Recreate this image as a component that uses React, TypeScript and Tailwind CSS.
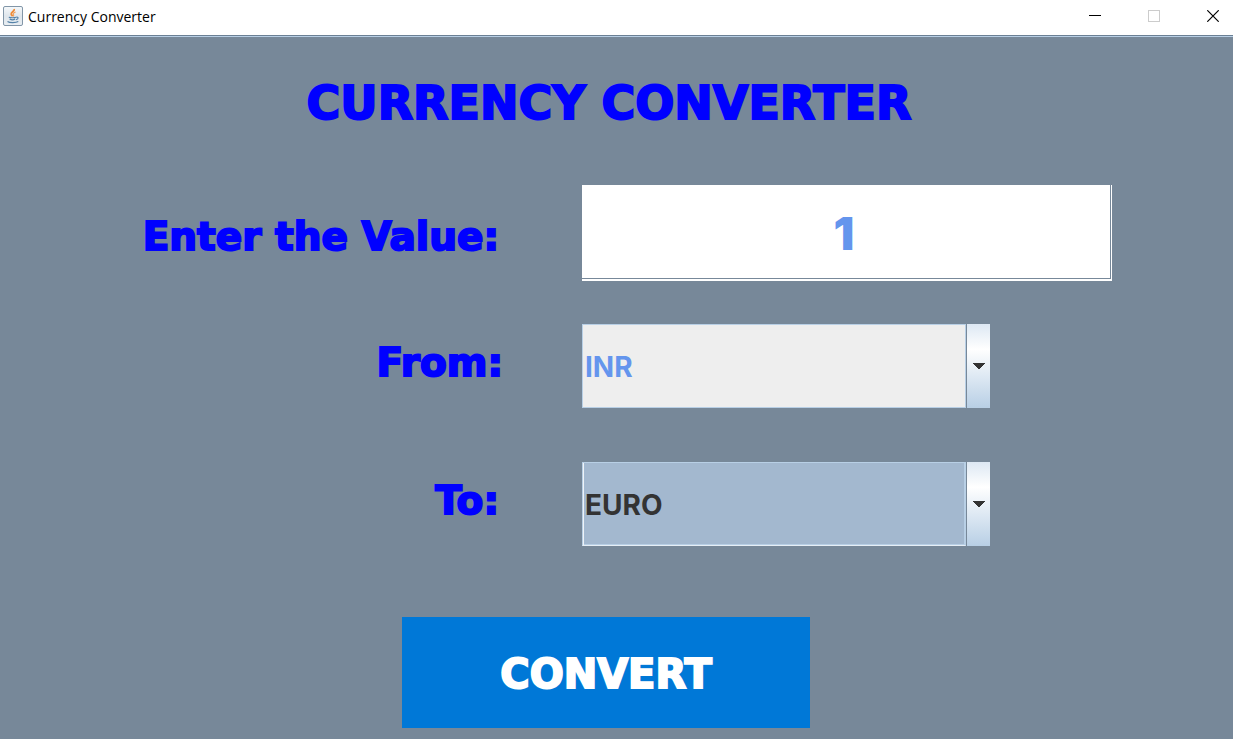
import { useState } from "react";

const currencies = ["INR", "EURO", "USD", "GBP"];

function JavaIcon() {
  return (
    <svg width="20" height="20" viewBox="0 0 20 20" aria-hidden="true">
      <defs>
        <linearGradient id="tile" x1="0" y1="0" x2="0" y2="1">
          <stop offset="0" stopColor="#f6f9fb" />
          <stop offset="0.5" stopColor="#dfe6ec" />
          <stop offset="1" stopColor="#e9eef2" />
        </linearGradient>
      </defs>
      <rect x="0.5" y="0.5" width="19" height="19" rx="1.5" fill="url(#tile)" stroke="#8296a8" />
      <path d="M11.2 3c.8 2.200-3.400 3-3 5 .2 1 1 1.500 1.400 2.200" fill="none" stroke="#ee8a35" strokeWidth="1.800" />
      <path d="M12.600 6c-1.800.6-2.800 1.400-2.300 2.500.3.700.7 1 .1 2" fill="none" stroke="#f0a05c" strokeWidth="1.200" />
      <path d="M5.800 11.200c1.800.7 5.800.7 7.200 0M6.600 13c1.500.8 4.200.8 5.600 0M4.500 15.500c2.300 1.500 8.500 1.400 10.800 0M13.200 11.200c2.300-.7 2.700 1.700-.1 2.500" fill="none" stroke="#5482a8" strokeWidth="1.200" />
    </svg>
  );
}

function TitleBar() {
  return (
    <header className="flex h-[37px] items-start justify-between border-b border-[#b8cfe5] bg-white">
      <div className="flex h-[35px] w-full items-center justify-between pb-[3px] shadow-[0_1px_0_#6b8094]">
        <div className="flex items-center gap-[5px] pl-[3px]">
          <JavaIcon />
          <span className="pt-px font-['Open_Sans','Noto_Sans',sans-serif] text-[14px] leading-5 text-black">Currency Converter</span>
        </div>
        <div className="flex gap-[47px] pr-[14px]">
          <button type="button" aria-label="Minimize">
            <svg width="12" height="12" viewBox="0 0 12 12" shapeRendering="crispEdges"><path d="M0 5.500h12" stroke="#000" /></svg>
          </button>
          <button type="button" aria-label="Maximize" disabled>
            <svg width="12" height="12" viewBox="0 0 12 12" shapeRendering="crispEdges"><rect x=".5" y=".5" width="11" height="11" fill="none" stroke="#ccc" /></svg>
          </button>
          <button type="button" aria-label="Close">
            <svg width="12" height="12" viewBox="0 0 12 12"><path d="M.3.300l11.400 11.400M11.700.300L.3 11.700" stroke="#000" strokeWidth="1.200" /></svg>
          </button>
        </div>
      </div>
    </header>
  );
}

type CurrencySelectProps = {
  id: string;
  value: string;
  onChange: (value: string) => void;
  className: string;
};

function CurrencySelect({ id, value, onChange, className }: CurrencySelectProps) {
  return (
    <div className="flex h-[84px] w-[77%] gap-px">
      <select
        id={id}
        value={value}
        onChange={(e) => onChange(e.target.value)}
        className={`min-w-0 flex-1 appearance-none border pt-0.5 pl-0.5 font-['Inter',sans-serif] text-[28px] font-bold outline-none ${className}`}
      >
        {currencies.map((c) => (
          <option key={c}>{c}</option>
        ))}
      </select>
      <div className="pointer-events-none flex w-[23px] items-center justify-center bg-linear-to-b from-[#dde8f3] via-white via-30% to-[#b8cfe5]">
        <svg width="12" height="6" viewBox="0 0 12 6" shapeRendering="crispEdges" aria-hidden="true">
          <path d="M0 0h12L6.500 6h-1z" fill="#333" />
        </svg>
      </div>
    </div>
  );
}

export default function App() {
  const [amount, setAmount] = useState("1");
  const [from, setFrom] = useState("INR");
  const [to, setTo] = useState("EURO");
  const label = "text-right text-[39px] leading-[48px] font-black text-[#0000ff] [-webkit-text-stroke:2px_#0000ff]";

  return (
    <div className="flex min-h-screen flex-col bg-[#778899] font-['DejaVu_Sans',sans-serif]">
      <TitleBar />
      <main className="pt-[38px] pb-[11px]">
        <h1 className="pr-[15px] text-center text-[46px] leading-[56px] font-black text-[#0000ff] [-webkit-text-stroke:2px_#0000ff]">
          CURRENCY CONVERTER
        </h1>
        <form onSubmit={(e) => e.preventDefault()}>
          <div className="mt-[54px] grid grid-cols-[503fr_530fr] items-center gap-x-[79px] pr-[121px]">
            <label htmlFor="amount" className={`${label} pt-2 pr-1`}>Enter the Value:</label>
            <div className="border-r border-b-2 border-white">
              <input
                id="amount"
                type="text"
                value={amount}
                onChange={(e) => setAmount(e.target.value)}
                className="block h-[94px] w-full border-r border-b border-[#778899] bg-white pt-0.5 pr-1 text-center font-['Inter',sans-serif] text-[46px] font-black text-[#6495ed] outline-none"
              />
            </div>
          </div>
          <div className="mt-[43px] grid grid-cols-[503fr_530fr] items-center gap-x-[79px] pr-[121px]">
            <label htmlFor="from" className={`${label} pb-1.5`}>From:</label>
            <CurrencySelect id="from" value={from} onChange={setFrom} className="border-[#b8cfe5] bg-[#eeeeee] text-[#6495ed]" />
          </div>
          <div className="mt-[54px] grid grid-cols-[503fr_530fr] items-center gap-x-[79px] pr-[121px]">
            <label htmlFor="to" className={`${label} pr-1 pb-1.5`}>To:</label>
            <CurrencySelect id="to" value={to} onChange={setTo} className="border-[#b8cfe5] border-b-[#e6eef6] bg-[#a3b8cf] text-[#333333] shadow-[inset_1px_0_0_#eef3f8,inset_-1px_-1px_0_#b8cfe5]" />
          </div>
          <div className="mt-[71px] flex justify-center pr-[21px]">
            <button type="submit" className="h-[111px] w-[408px] bg-[#0078d7] pt-0.5 text-[40px] font-black text-white [-webkit-text-stroke:2px_#ffffff]">
              CONVERT
            </button>
          </div>
        </form>
      </main>
    </div>
  );
}
